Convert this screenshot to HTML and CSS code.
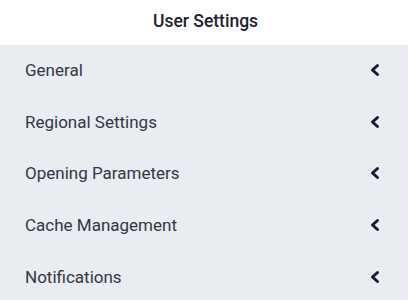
FILE: index.html
```html
<!DOCTYPE html>
<html>
  <head>
    <title>User Settings</title>
    <link rel="stylesheet" href="styles.css">
  </head>
  <body>
    <h1 class="title">User Settings</h1>

    <ul class="settings">
      <li class="settings__item">
        <span class="settings__label">General</span>
        <svg class="settings__chevron" width="10" height="14" viewBox="0 0 10 14"><polyline points="7.5,2.5 2.5,7 7.5,11.5" /></svg>
      </li>
      <li class="settings__item">
        <span class="settings__label">Regional Settings</span>
        <svg class="settings__chevron" width="10" height="14" viewBox="0 0 10 14"><polyline points="7.5,2.5 2.5,7 7.5,11.5" /></svg>
      </li>
      <li class="settings__item">
        <span class="settings__label">Opening Parameters</span>
        <svg class="settings__chevron" width="10" height="14" viewBox="0 0 10 14"><polyline points="7.5,2.5 2.5,7 7.5,11.5" /></svg>
      </li>
      <li class="settings__item">
        <span class="settings__label">Cache Management</span>
        <svg class="settings__chevron" width="10" height="14" viewBox="0 0 10 14"><polyline points="7.5,2.5 2.5,7 7.5,11.5" /></svg>
      </li>
      <li class="settings__item">
        <span class="settings__label">Notifications</span>
        <svg class="settings__chevron" width="10" height="14" viewBox="0 0 10 14"><polyline points="7.5,2.5 2.5,7 7.5,11.5" /></svg>
      </li>
    </ul>
  </body>
</html>
```

FILE: styles.css
```css
body {
  margin: 0;
  background: #fff;
  font-family: Roboto, "Liberation Sans", sans-serif;
  color: #2b2d42;
}

.title {
  margin: 0;
  height: 45px;
  line-height: 43px;
  text-align: center;
  font-size: 17.5px;
  font-weight: 500;
  color: #1f2233;
}

.settings {
  list-style-type: none;
  margin: 0 3px 0 0;
  padding: 0;
  background: #e9ecf0;
}

.settings__item {
  display: flex;
  align-items: center;
  justify-content: space-between;
  height: 51.6px;
  padding: 0 28px 0 25px;
  border-bottom: 1px solid #eef0f3;
  box-sizing: border-box;
}

.settings__label {
  font-size: 17px;
  color: #333646;
}

.settings__chevron {
  fill: none;
  stroke: #141a33;
  stroke-width: 3;
  stroke-linecap: round;
  stroke-linejoin: round;
}
```
